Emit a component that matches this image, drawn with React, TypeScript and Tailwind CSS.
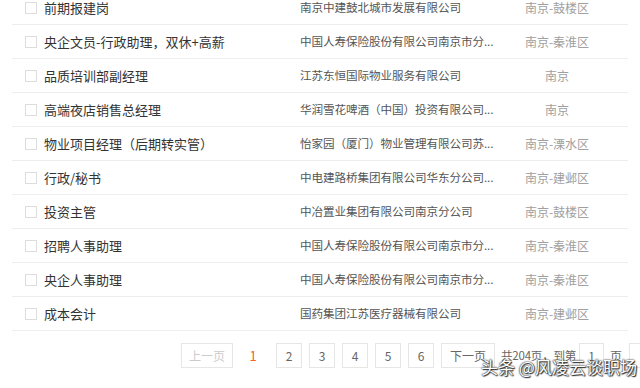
import React from "react";

interface JobRow {
  title: string;
  company: string;
  location: string;
}

const jobs: JobRow[] = [
  { title: "前期报建岗", company: "南京中建鼓北城市发展有限公司", location: "南京-鼓楼区" },
  { title: "央企文员-行政助理，双休+高薪", company: "中国人寿保险股份有限公司南京市分...", location: "南京-秦淮区" },
  { title: "品质培训部副经理", company: "江苏东恒国际物业服务有限公司", location: "南京" },
  { title: "高端夜店销售总经理", company: "华润雪花啤酒（中国）投资有限公司...", location: "南京" },
  { title: "物业项目经理（后期转实管）", company: "怡家园（厦门）物业管理有限公司苏...", location: "南京-溧水区" },
  { title: "行政/秘书", company: "中电建路桥集团有限公司华东分公司...", location: "南京-建邺区" },
  { title: "投资主管", company: "中冶置业集团有限公司南京分公司", location: "南京-鼓楼区" },
  { title: "招聘人事助理", company: "中国人寿保险股份有限公司南京市分...", location: "南京-秦淮区" },
  { title: "央企人事助理", company: "中国人寿保险股份有限公司南京市分...", location: "南京-秦淮区" },
  { title: "成本会计", company: "国药集团江苏医疗器械有限公司", location: "南京-建邺区" },
];

const pages = [2, 3, 4, 5, 6];

const App: React.FC = () => {
  return (
    <div className="relative w-[640px] h-[388px] overflow-hidden bg-white font-['Microsoft_YaHei','Noto_Sans_CJK_SC',sans-serif]">
      {/* job list */}
      <div className="ml-[12px] w-[616px] mt-[-9px]">
        {jobs.map((job, i) => (
          <div
            key={i}
            className="flex items-center h-[34px] border-b border-[#eeeeee] pl-[13px]"
          >
            <span className="w-[12px] h-[12px] border border-[#dddddd] bg-white shrink-0" />
            <span className="ml-[7px] w-[256px] shrink-0 text-[13px] text-[#333333] whitespace-nowrap">
              {job.title}
            </span>
            <span className="w-[212px] shrink-0 text-[11.6px] tracking-[-0.1px] text-[#555555] whitespace-nowrap overflow-hidden">
              {job.company}
            </span>
            <span className="w-[90px] shrink-0 text-center text-[12px] text-[#a0a0a0] whitespace-nowrap">
              {job.location}
            </span>
          </div>
        ))}
      </div>

      {/* pagination */}
      <div className="flex items-center mt-[12px] ml-[181px] w-[600px] h-[25px] text-[12px] whitespace-nowrap">
        <span className="shrink-0 w-[52px] h-[25px] flex items-center justify-center border border-[#e6e6e6] text-[#cccccc]">
          上一页
        </span>
        <span className="shrink-0 ml-[8px] w-[24px] text-center text-[13px] text-[#f5612a]">1</span>
        {pages.map((p, i) => (
          <span
            key={p}
            className={`${i === 0 ? "ml-[11px]" : "ml-[7px]"} shrink-0 w-[26px] h-[25px] flex items-center justify-center border border-[#e6e6e6] text-[#666666]`}
          >
            {p}
          </span>
        ))}
        <span className="shrink-0 ml-[7px] w-[54px] h-[25px] flex items-center justify-center border border-[#e6e6e6] text-[#666666]">
          下一页
        </span>
        <span className="shrink-0 ml-[6px] w-[78px] text-[11.5px] tracking-[-0.2px] text-[#666666]">共204页，到第</span>
        <span className="shrink-0 w-[25px] h-[25px] flex items-center justify-center border border-[#e6e6e6] text-[#666666]">
          1
        </span>
        <span className="shrink-0 ml-[6px] text-[#666666]">页</span>
        <span className="shrink-0 ml-[7px] w-[44px] h-[25px] flex items-center pl-[10px] border border-[#e6e6e6] text-[#666666]">
          确定
        </span>
      </div>

      {/* watermark */}
      <div className="absolute left-[481px] top-[357px] text-[17px] leading-[20px] text-white whitespace-nowrap [text-shadow:0_0_1px_#222,0_0_2px_#222,1px_1px_1px_#333]">
        头条 @风凌云谈职场
      </div>
    </div>
  );
};

export default App;
